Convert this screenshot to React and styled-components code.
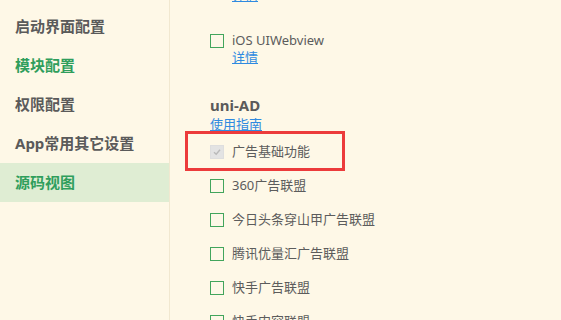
import React from 'react'
import styled, { createGlobalStyle } from 'styled-components'

const GlobalStyle = createGlobalStyle`
  html, body {
    margin: 0;
    padding: 0;
    background: #fef8e7;
    overflow: hidden;
  }
  body {
    font-family: "Noto Sans", "Noto Sans CJK SC", sans-serif;
  }
`

const menu = [
  { name: '启动界面配置' },
  { name: '模块配置', green: true },
  { name: '权限配置' },
  { name: 'App常用其它设置' },
  { name: '源码视图', green: true, active: true },
]

const adItems = [
  '360广告联盟',
  '今日头条穿山甲广告联盟',
  '腾讯优量汇广告联盟',
  '快手广告联盟',
  '快手内容联盟',
]

function Check({ disabled }) {
  return (
    <Box $disabled={disabled}>
      {disabled && (
        <svg width="10" height="10" viewBox="0 0 10 10">
          <polyline points="2,5.2 4.2,7.2 8,2.8" fill="none" stroke="#b9b9b9" strokeWidth="1.4" />
        </svg>
      )}
    </Box>
  )
}

export default function App() {
  return (
    <>
      <GlobalStyle />
      <Container>
        <Sidebar>
          {menu.map((m) => (
            <MenuItem key={m.name} $green={m.green} $active={m.active}>
              {m.name}
            </MenuItem>
          ))}
        </Sidebar>
        <Main>
          <Link>详情</Link>
          <Option>
            <Row $flat>
              <Check />
              <Label>iOS UIWebview</Label>
            </Row>
            <Link>详情</Link>
          </Option>

          <Heading>uni-AD</Heading>
          <Link $flush>使用指南</Link>

          <Row $first>
            <Highlight />
            <Check disabled />
            <Label>广告基础功能</Label>
          </Row>
          {adItems.map((t) => (
            <Row key={t}>
              <Check />
              <Label>{t}</Label>
            </Row>
          ))}
        </Main>
      </Container>
    </>
  )
}

const Container = styled.div`
  display: flex;
  height: 320px;
  overflow: hidden;
`

const Sidebar = styled.div`
  width: 169px;
  flex-shrink: 0;
  border-right: 1px solid #f1e8d0;
  padding-top: 7px;
`

const MenuItem = styled.div`
  height: 39px;
  line-height: 39px;
  padding-left: 15px;
  font-size: 15px;
  font-weight: bold;
  color: ${(p) => (p.$green ? '#2f9e5c' : '#5a5a5a')};
  background: ${(p) => (p.$active ? '#dfedd3' : 'transparent')};
`

const Main = styled.div`
  flex: 1;
  padding-left: 40px;
  margin-top: -13px;
`

const Option = styled.div`
  margin-top: 28px;
`

const Row = styled.div`
  position: relative;
  display: flex;
  align-items: center;
  height: 17px;
  margin-top: ${(p) => (p.$flat ? '0' : p.$first ? '10px' : '17px')};
`

const Box = styled.span`
  flex-shrink: 0;
  box-sizing: border-box;
  width: 14px;
  height: 14px;
  display: flex;
  align-items: center;
  justify-content: center;
  background-color: ${(p) => (p.$disabled ? '#e3e3e3' : 'transparent')};
  border: ${(p) => (p.$disabled ? '1px solid #dedede' : '1.5px solid #42a55c')};
`

const Label = styled.span`
  margin-left: 8px;
  font-size: 13px;
  line-height: 17px;
  color: #5c5c5c;
`

const Link = styled.a`
  display: block;
  width: max-content;
  margin-left: ${(p) => (p.$flush ? '0' : '22px')};
  font-size: 13px;
  line-height: 17px;
  color: #2f8ae0;
  text-decoration: underline;
  cursor: pointer;
`

const Heading = styled.div`
  margin-top: 29px;
  font-size: 15px;
  font-weight: bold;
  line-height: 21px;
  color: #5a5a5a;
`

const Highlight = styled.div`
  position: absolute;
  left: -25px;
  top: -12px;
  width: 160px;
  height: 40px;
  box-sizing: border-box;
  border: 3px solid #ec3b3b;
  pointer-events: none;
`
